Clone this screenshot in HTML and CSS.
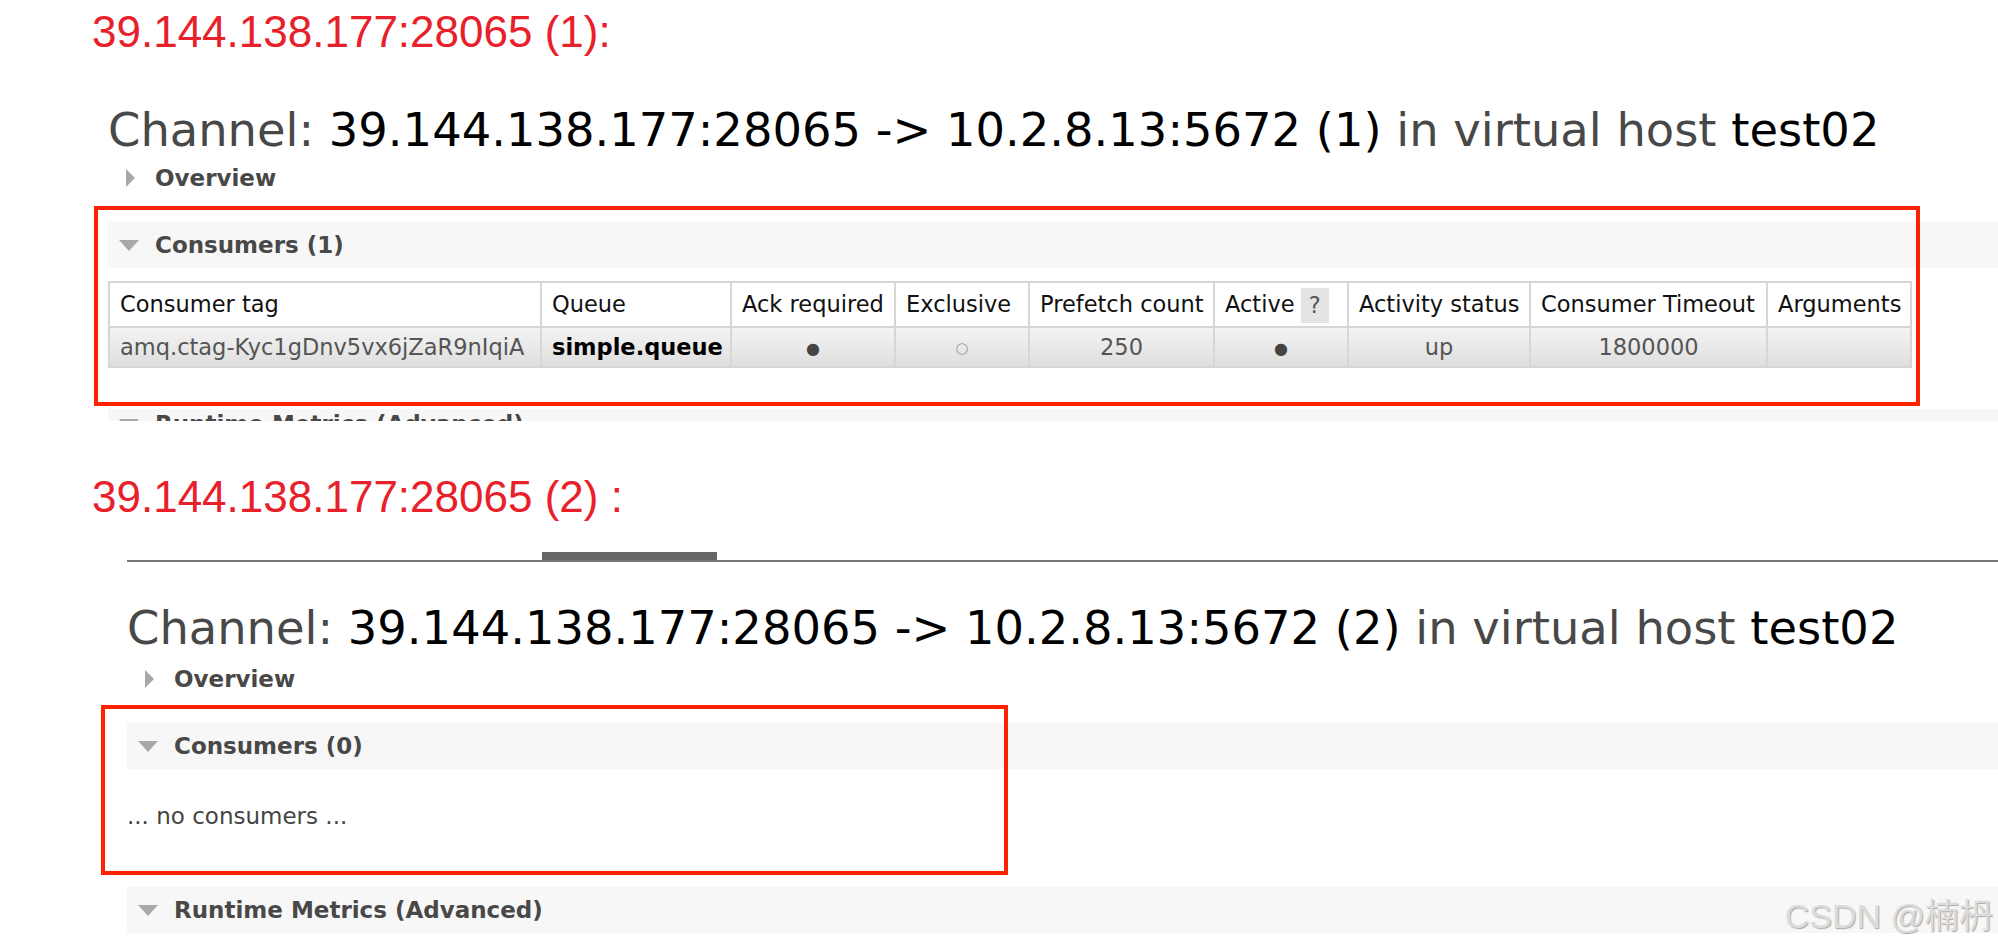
FILE: index.html
```html
<!DOCTYPE html>
<html lang="en">
<head>
<meta charset="UTF-8">
<meta name="viewport" content="width=device-width, initial-scale=1.0">
<title>Channel consumers</title>
<link rel="stylesheet" href="styles.css">
</head>
<body>

<!-- First channel: one consumer -->
<div class="shot shot-one">
    <p class="note">39.144.138.177:28065 (1):</p>
    <div class="page">
        <h1><span class="label">Channel:</span> 39.144.138.177:28065 -&gt; 10.2.8.13:5672 (1) <span class="label">in virtual host</span> test02</h1>
        <h2 class="toggle closed">Overview</h2>
        <div class="section">
            <h2 class="toggle open">Consumers (1)</h2>
            <table class="list">
                <colgroup>
                    <col style="width: 432px">
                    <col style="width: 190px">
                    <col style="width: 164px">
                    <col style="width: 134px">
                    <col style="width: 185px">
                    <col style="width: 134px">
                    <col style="width: 182px">
                    <col style="width: 237px">
                    <col style="width: 144px">
                </colgroup>
                <thead>
                    <tr>
                        <th>Consumer tag</th>
                        <th>Queue</th>
                        <th>Ack required</th>
                        <th>Exclusive</th>
                        <th>Prefetch count</th>
                        <th>Active <span class="help">?</span></th>
                        <th>Activity status</th>
                        <th>Consumer Timeout</th>
                        <th>Arguments</th>
                    </tr>
                </thead>
                <tbody>
                    <tr>
                        <td>amq.ctag-Kyc1gDnv5vx6jZaR9nIqiA</td>
                        <td class="queue">simple.queue</td>
                        <td class="c"><span class="yes">&#9679;</span></td>
                        <td class="c"><span class="no">&#9675;</span></td>
                        <td class="c">250</td>
                        <td class="c"><span class="yes">&#9679;</span></td>
                        <td class="c">up</td>
                        <td class="c">1800000</td>
                        <td class="c"></td>
                    </tr>
                </tbody>
            </table>
        </div>
        <div class="section runtime">
            <h2 class="toggle open">Runtime Metrics (Advanced)</h2>
        </div>
    </div>
    <div class="mark mark-one"></div>
</div>

<!-- Second channel: no consumers -->
<div class="shot shot-two">
    <p class="note">39.144.138.177:28065 (2) :</p>
    <div class="page">
        <div class="tabs"><div class="tab-on"></div></div>
        <h1><span class="label">Channel:</span> 39.144.138.177:28065 -&gt; 10.2.8.13:5672 (2) <span class="label">in virtual host</span> test02</h1>
        <h2 class="toggle closed">Overview</h2>
        <div class="section">
            <h2 class="toggle open">Consumers (0)</h2>
            <p class="empty">... no consumers ...</p>
        </div>
        <div class="section runtime">
            <h2 class="toggle open">Runtime Metrics (Advanced)</h2>
        </div>
    </div>
    <div class="mark mark-two"></div>
</div>

<div class="watermark">CSDN @楠枬</div>

</body>
</html>
```

FILE: styles.css
```css
html, body {
    margin: 0;
    padding: 0;
    background: #fff;
}
body {
    position: relative;
    width: 1998px;
    height: 952px;
    overflow: hidden;
    font-family: "DejaVu Sans", Verdana, sans-serif;
    color: #484848;
}
.shot {
    position: relative;
}
.shot-one {
    height: 421px;
    padding-top: 7px;
    box-sizing: border-box;
    overflow: hidden;
}
.shot-two {
    padding-top: 51px;
}
.note {
    margin: 0 0 0 92px;
    font-family: "Liberation Sans", Arial, sans-serif;
    font-size: 44px;
    line-height: 50px;
    color: #e8202a;
}
.shot-one .page {
    padding-left: 108px;
}
.shot-two .page {
    padding-left: 127px;
}
.tabs {
    margin-top: 30px;
    height: 8px;
    border-bottom: 2px solid #777;
}
.tab-on {
    margin-left: 415px;
    width: 175px;
    height: 8px;
    background: #666;
}
h1 {
    margin: 46px 0 0 0;
    font-size: 46.4px;
    font-weight: normal;
    line-height: 54px;
    color: #000;
    white-space: nowrap;
}
.shot-two h1 {
    margin-top: 39px;
}
h1 .label {
    color: #484848;
}
.toggle {
    margin: 0;
    font-size: 23px;
    font-weight: bold;
    color: #484848;
    white-space: nowrap;
}
.toggle.closed {
    margin-top: 6px;
    padding-left: 18px;
    line-height: 30px;
}
.shot-two .toggle.closed {
    margin-top: 9px;
}
.toggle.closed::before {
    content: "";
    display: inline-block;
    width: 0;
    height: 0;
    border-top: 9.5px solid transparent;
    border-bottom: 9.5px solid transparent;
    border-left: 9px solid #a8a8a8;
    margin-right: 20px;
    vertical-align: -1px;
}
.section {
    margin-top: 29px;
}
.toggle.open {
    padding-left: 11px;
    line-height: 46px;
    background: #f7f7f7;
}
.toggle.open::before {
    content: "";
    display: inline-block;
    width: 0;
    height: 0;
    border-left: 10px solid transparent;
    border-right: 10px solid transparent;
    border-top: 11px solid #a8a8a8;
    margin-right: 16px;
    vertical-align: 2px;
}
.runtime {
    margin-top: 41px;
}
/* the first screenshot is cropped through this header */
.shot-one .runtime .toggle {
    line-height: 30px;
}
.shot-two .runtime {
    margin-top: 56px;
}
.list {
    margin-top: 13px;
    width: 1802px;
    table-layout: fixed;
    border-collapse: collapse;
    font-size: 22.5px;
}
.list th,
.list td {
    border: 2px solid #d6d6d6;
    padding: 0 0 0 10px;
    white-space: nowrap;
    overflow: hidden;
}
.list th {
    height: 43px;
    line-height: 43px;
    font-weight: normal;
    text-align: left;
    color: #111;
    background: #fff;
}
.list td {
    height: 35px;
    line-height: 35px;
    color: #555;
    background: linear-gradient(#f3f3f3, #dfdfdf);
}
.list td.c {
    text-align: center;
    padding-left: 0;
}
.list td.queue {
    font-weight: bold;
    color: #000;
}
.help {
    display: inline-block;
    width: 28px;
    height: 35px;
    line-height: 35px;
    margin-left: -1px;
    text-align: center;
    vertical-align: middle;
    background: #e4e4e4;
    color: #555;
}
.yes {
    font-size: 16px;
    color: #444;
}
.no {
    font-size: 15px;
    color: #999;
}
.empty {
    margin: 32px 0 0 0;
    font-size: 23px;
    line-height: 30px;
    color: #444;
}
.mark {
    position: absolute;
    border: 4px solid #ff2200;
    box-sizing: border-box;
}
.mark-one {
    left: 94px;
    top: 206px;
    width: 1826px;
    height: 200px;
}
.mark-two {
    left: 101px;
    top: 284px;
    width: 907px;
    height: 170px;
}
.watermark {
    position: absolute;
    right: 5px;
    top: 896px;
    font-family: "Liberation Sans", Arial, "Noto Sans CJK SC", sans-serif;
    font-size: 34px;
    line-height: 40px;
    color: #dcdcdc;
    text-shadow: 1px 1px 1px #aaa;
}
```
